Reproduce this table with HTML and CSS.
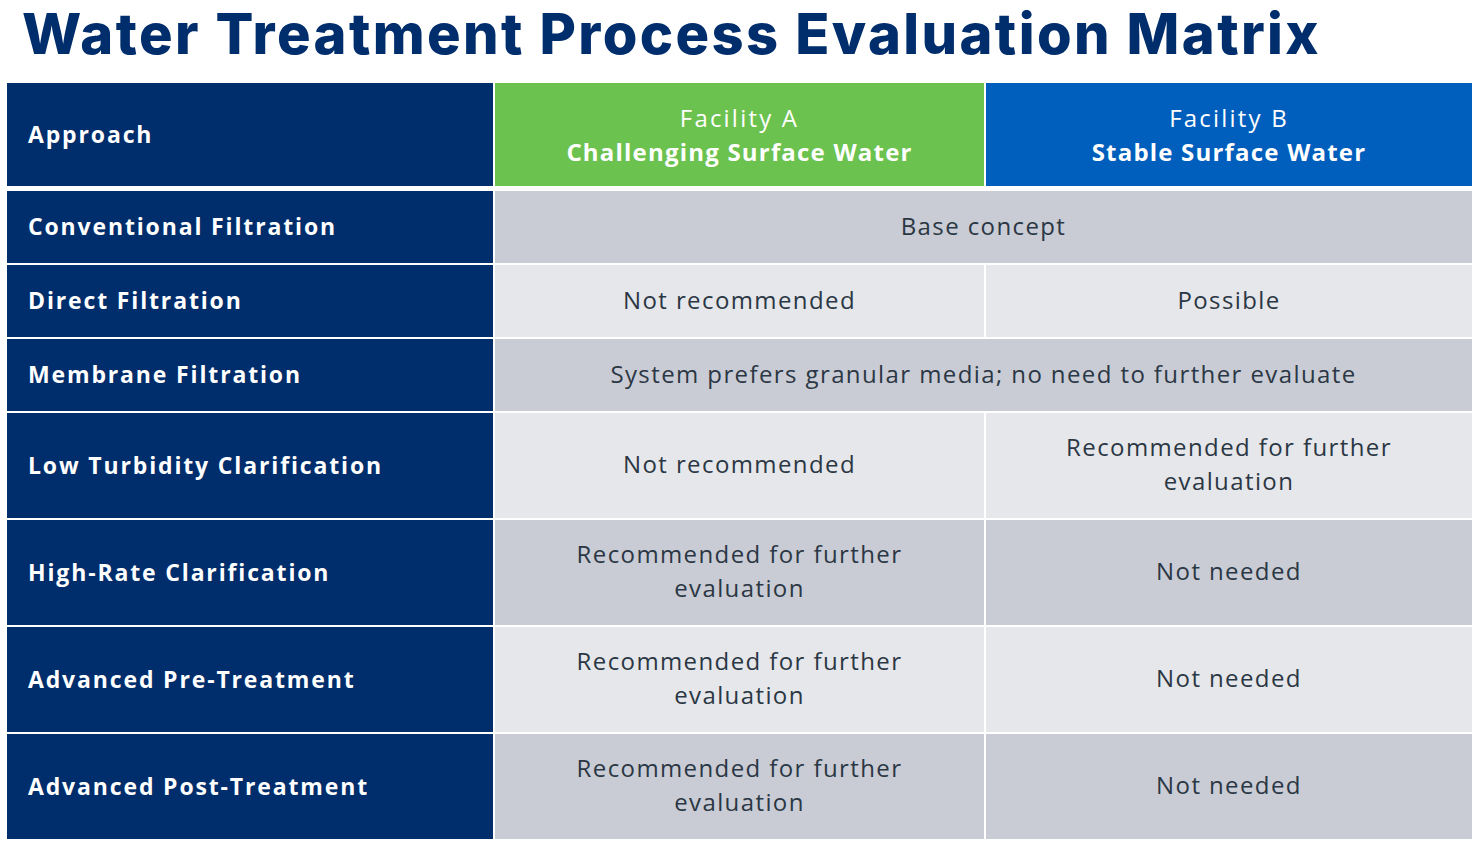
FILE: index.html
```html
<!DOCTYPE html>
<html lang="en">
<head>
<meta charset="utf-8">
<title>Water Treatment Process Evaluation Matrix</title>
<link rel="stylesheet" href="styles.css">
</head>
<body>
<h1 class="title">Water Treatment Process Evaluation Matrix</h1>
<div class="matrix">
  <div class="head">
    <div class="cell label">Approach</div>
    <div class="cell fac fac-a"><span class="fac-name">Facility A</span><span class="fac-desc">Challenging Surface Water</span></div>
    <div class="cell fac fac-b"><span class="fac-name">Facility B</span><span class="fac-desc">Stable Surface Water</span></div>
  </div>
  <div class="body">
    <div class="cell label">Conventional Filtration</div>
    <div class="cell val dark span2">Base concept</div>

    <div class="cell label">Direct Filtration</div>
    <div class="cell val light">Not recommended</div>
    <div class="cell val light">Possible</div>

    <div class="cell label">Membrane Filtration</div>
    <div class="cell val dark span2">System prefers granular media; no need to further evaluate</div>

    <div class="cell label">Low Turbidity Clarification</div>
    <div class="cell val light">Not recommended</div>
    <div class="cell val light">Recommended for further<br>evaluation</div>

    <div class="cell label">High-Rate Clarification</div>
    <div class="cell val dark">Recommended for further<br>evaluation</div>
    <div class="cell val dark">Not needed</div>

    <div class="cell label">Advanced Pre-Treatment</div>
    <div class="cell val light">Recommended for further<br>evaluation</div>
    <div class="cell val light">Not needed</div>

    <div class="cell label">Advanced Post-Treatment</div>
    <div class="cell val dark">Recommended for further<br>evaluation</div>
    <div class="cell val dark">Not needed</div>
  </div>
</div>
</body>
</html>
```

FILE: styles.css
```css
html, body {
  margin: 0;
  padding: 0;
  background: #ffffff;
}

body {
  font-family: "Open Sans", "Noto Sans", sans-serif;
  width: 1482px;
  height: 850px;
  overflow: hidden;
}

.title {
  margin: 0;
  height: 83px;
  padding-left: 22px;
  box-sizing: border-box;
  font-family: Inter, "Open Sans", sans-serif;
  font-size: 56px;
  font-weight: 800;
  line-height: 68px;
  color: #002d6b;
  letter-spacing: 2.4px;
  white-space: nowrap;
}

.matrix {
  margin-left: 7px;
  width: 1465px;
}

.head,
.body {
  display: grid;
  grid-template-columns: 486px 489px 486px;
  column-gap: 2px;
}

.head {
  height: 103px;
}

.body {
  margin-top: 5px;
  row-gap: 2px;
  grid-template-rows: 72px 72px 72px 105px 105px 105px 105px;
}

.cell {
  display: flex;
  align-items: center;
  box-sizing: border-box;
}

.label {
  background: #002d6b;
  color: #ffffff;
  font-weight: 700;
  font-size: 23px;
  padding-left: 21px;
  padding-bottom: 2px;
  letter-spacing: 1.85px;
}

.fac {
  flex-direction: column;
  justify-content: center;
  color: #ffffff;
  font-size: 24px;
  line-height: 34px;
  text-align: center;
}

.fac-a { background: #6cc24f; }
.fac-b { background: #005ebc; }

.fac-name {
  font-weight: 400;
  letter-spacing: 2.2px;
}

.fac-desc {
  font-weight: 700;
  letter-spacing: 1.2px;
}

.val {
  justify-content: center;
  text-align: center;
  color: #2b3744;
  font-size: 24px;
  line-height: 34px;
  letter-spacing: 1.4px;
  padding-bottom: 3px;
}

.dark { background: #c9ccd5; }
.light { background: #e6e7ea; }

.span2 { grid-column: span 2; }
```
